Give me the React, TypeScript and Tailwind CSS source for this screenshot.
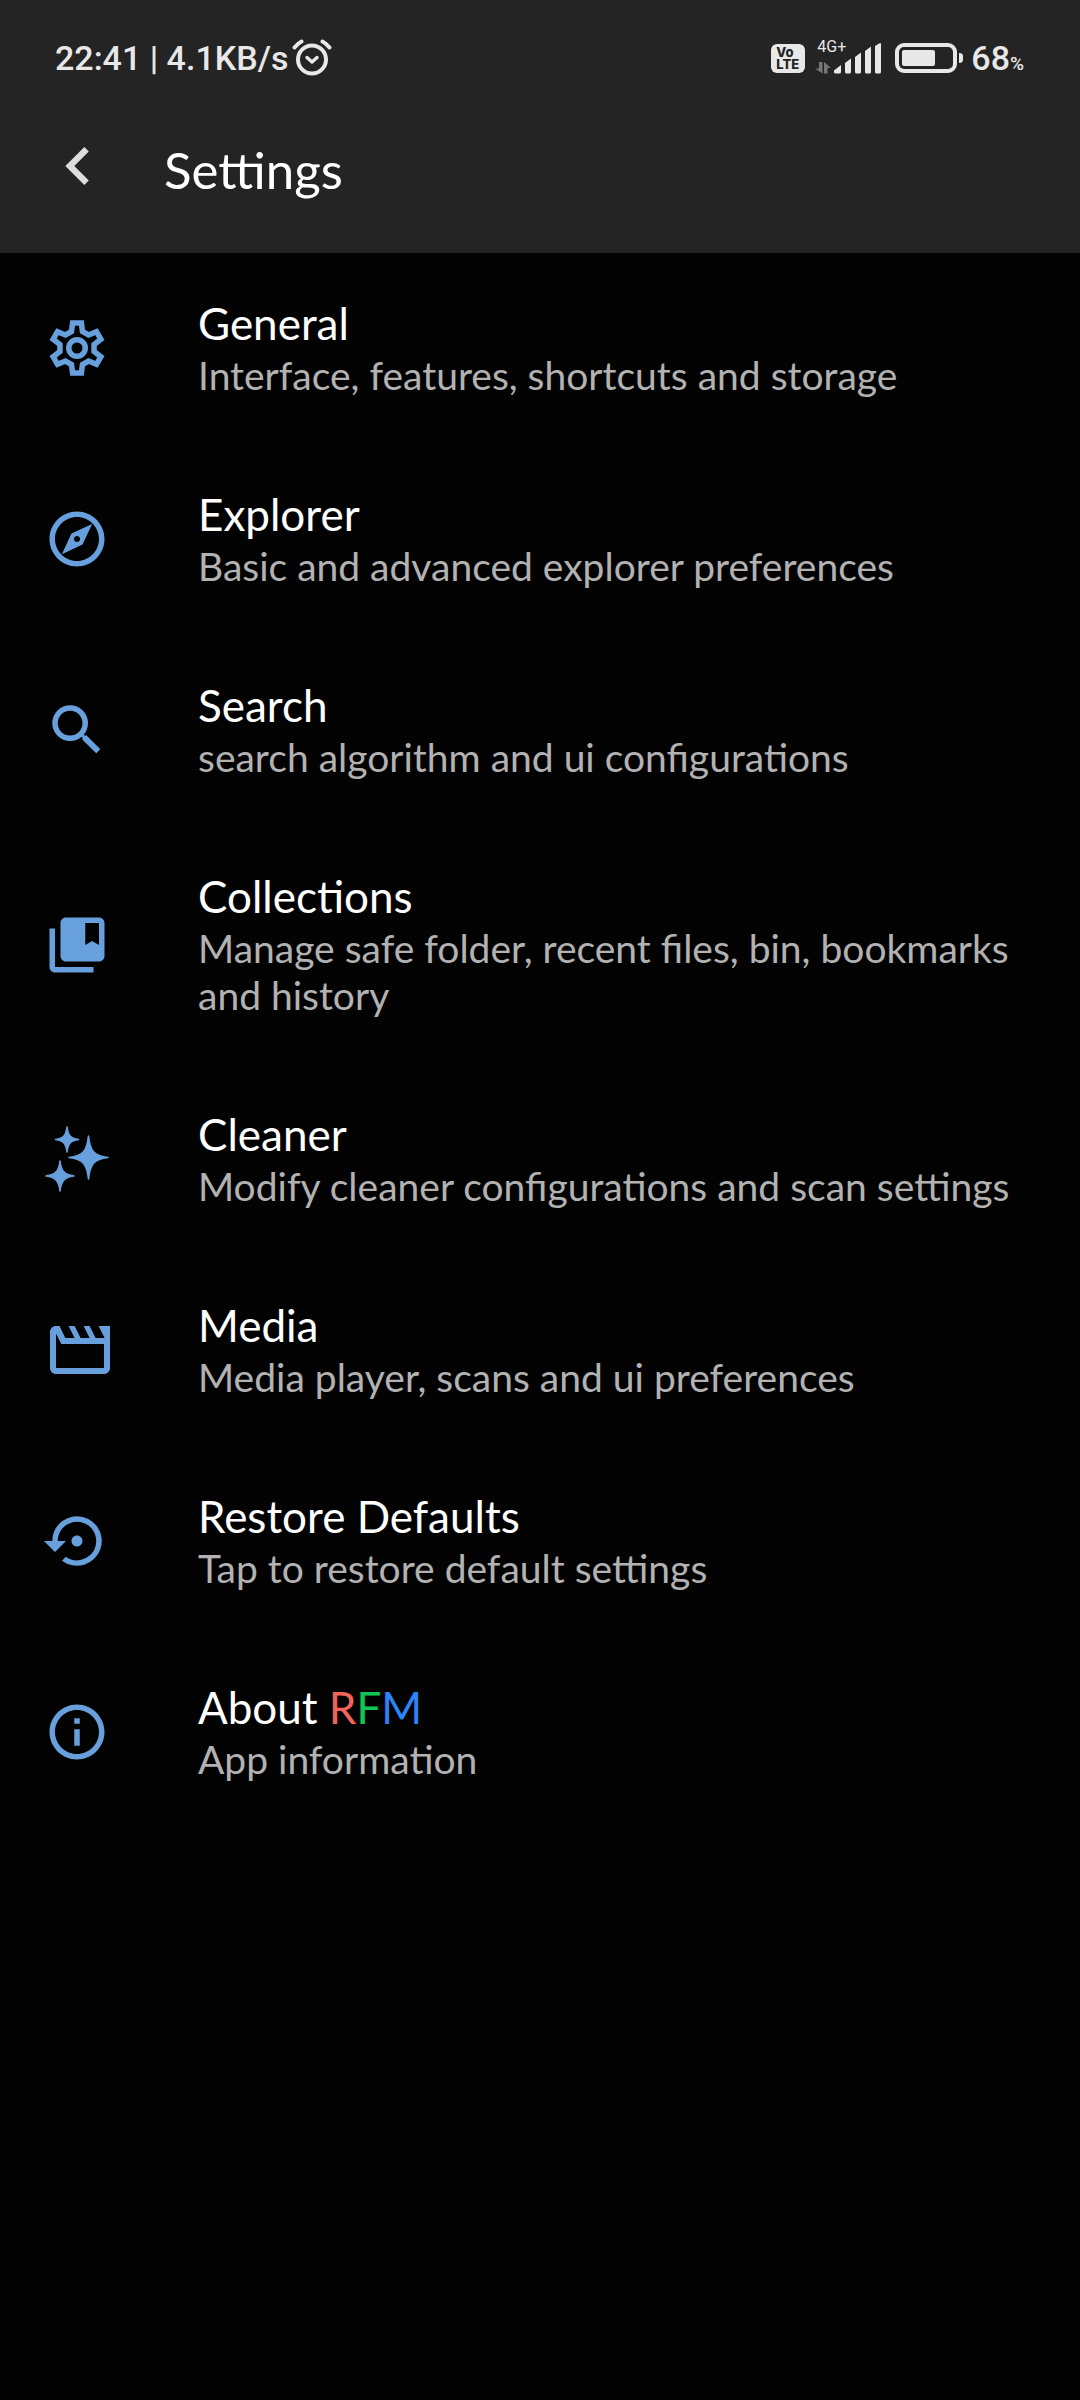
import React from "react";
import {
  MdChevronLeft,
  MdCollectionsBookmark,
  MdInfoOutline,
  MdOutlineExplore,
  MdSearch,
  MdSettingsBackupRestore,
} from "react-icons/md";

const gearTooth = [
  [-2, -6],
  [-1.6, -9.1],
  [1.6, -9.1],
  [2, -6],
];

const gearPoints = Array.from({ length: 6 }, (_, i) => (i * Math.PI) / 3)
  .flatMap((a) =>
    gearTooth.map(([x, y]) =>
      [12 + x * Math.cos(a) - y * Math.sin(a), 12 + x * Math.sin(a) + y * Math.cos(a)]
        .map((n) => n.toFixed(2))
        .join(","),
    ),
  )
  .join(" ");

function GearIcon() {
  return (
    <svg viewBox="0 0 24 24" className="size-[66px]" fill="none" stroke="currentColor" strokeWidth="2" aria-hidden="true">
      <polygon points={gearPoints} />
      <circle cx="12" cy="12" r="3" />
    </svg>
  );
}

function SparklesIcon() {
  return (
    <svg viewBox="0 0 66 66" className="size-[66px]" fill="currentColor" stroke="currentColor" strokeWidth="1.6" strokeLinejoin="round" aria-hidden="true">
      <path d="M44.5 10C46 25 50 30 64 31.5C50 33 46 38 44.5 53C43 38 39 33 25 31.5C39 30 43 25 44.5 10Z" />
      <path d="M23 1C24 9.500 26.5 12.500 34.500 13.500C26.5 14.500 24 17.500 23 26C22 17.500 19.5 14.500 11.500 13.500C19.5 12.500 22 9.500 23 1Z" />
      <path d="M16 35C17 45 20.5 49 30 50C20.5 51 17 55 16 65C15 55 11.5 51 2 50C11.5 49 15 45 16 35Z" />
    </svg>
  );
}

function ClapperIcon() {
  return (
    <svg viewBox="0 0 24 24" className="size-[72px] shrink-0" fill="currentColor" aria-hidden="true">
      <path d="M18.2 4l2 4h-3l-2-4h-2l2 4h-3l-2-4h-2l2 4H7.1L5.2 4H4c-1.1 0-2 .9-2 2v12c0 1.1.9 2 2 2h16c1.1 0 2-.9 2-2V4zM4 6.47L5.76 10H20v8H4z" />
    </svg>
  );
}

function AlarmIcon() {
  return (
    <svg viewBox="0 0 40 38" className="h-[38px] w-10" fill="none" stroke="currentColor" strokeLinecap="round" aria-hidden="true">
      <circle cx="20" cy="20.5" r="14" strokeWidth="4" />
      <path d="M15 18.5l5 4.5 5-4.5" strokeWidth="3.4" strokeLinejoin="round" />
      <path d="M2.5 8.5C4.5 6 6.5 4 9.5 2.5M37.5 8.5C35.5 6 33.5 4 30.5 2.5" strokeWidth="4" />
    </svg>
  );
}

function SignalIcon() {
  return (
    <svg viewBox="0 0 68 31" className="h-[31px] w-[68px]" fill="currentColor" aria-hidden="true">
      <g fill="#777777">
        <path d="M4 19h3.5v11.5L0 25.5h4z" />
        <path d="M9 30.5V19l7 6h-3.5v5.5z" />
      </g>
      <path d="M19 27.5l7-5.5V29a1.5 1.5 0 0 1-1.5 1.5h-4A1.5 1.5 0 0 1 19 29z" />
      <path d="M30 20l6-4.5V29a1.5 1.5 0 0 1-1.5 1.5h-3A1.5 1.5 0 0 1 30 29z" />
      <path d="M40 14l6-4.5V29a1.5 1.5 0 0 1-1.5 1.5h-3A1.5 1.5 0 0 1 40 29z" />
      <path d="M50 8l6-4.5V29a1.5 1.5 0 0 1-1.5 1.5h-3A1.5 1.5 0 0 1 50 29z" />
      <path d="M60 3l5-3q1 0 1 1V29a1.5 1.5 0 0 1-1.5 1.5h-3A1.5 1.5 0 0 1 60 29z" />
    </svg>
  );
}

function BatteryIcon() {
  return (
    <svg viewBox="0 0 68 30" className="h-[30px] w-[68px]" fill="currentColor" aria-hidden="true">
      <rect x="2" y="2" width="58" height="26" rx="7" fill="none" stroke="currentColor" strokeWidth="4" />
      <rect x="7" y="7" width="33" height="16" rx="2" />
      <path d="M64 10q4 0 4 3v4q0 3-4 3z" />
    </svg>
  );
}

function StatusBar() {
  return (
    <div className="flex h-[116px] items-center justify-between pr-14 pl-[55px] font-[Roboto,sans-serif] text-[34px] leading-10 text-[#e8e8e8]">
      <div className="flex items-center gap-1">
        <span className="font-medium">22:41 | 4.1KB/s</span>
        <AlarmIcon />
      </div>
      <div className="flex items-center">
        <div className="flex h-[29px] w-[34px] flex-col items-start justify-center rounded-md bg-[#e8e8e8] pl-[5px] font-[Inter,sans-serif] text-[13px] leading-3 font-extrabold text-[#242424]">
          <span>Vo</span>
          <span>LTE</span>
        </div>
        <div className="relative ml-[10px]">
          <SignalIcon />
          <span className="absolute -top-1 left-0.5 text-[16px] leading-4">4G+</span>
        </div>
        <div className="ml-3">
          <BatteryIcon />
        </div>
        <div className="ml-2 flex items-baseline font-medium">
          <span>68</span>
          <span className="text-[19px] leading-5">%</span>
        </div>
      </div>
    </div>
  );
}

type Item = { icon: React.ReactNode; title: React.ReactNode; summary: string };

const items: Item[] = [
  { icon: <GearIcon />, title: "General", summary: "Interface, features, shortcuts and storage" },
  { icon: <MdOutlineExplore className="size-[66px]" />, title: "Explorer", summary: "Basic and advanced explorer preferences" },
  { icon: <MdSearch className="size-[66px]" />, title: "Search", summary: "search algorithm and ui configurations" },
  {
    icon: <MdCollectionsBookmark className="size-[66px]" />,
    title: "Collections",
    summary: "Manage safe folder, recent files, bin, bookmarks and history",
  },
  { icon: <SparklesIcon />, title: "Cleaner", summary: "Modify cleaner configurations and scan settings" },
  { icon: <ClapperIcon />, title: "Media", summary: "Media player, scans and ui preferences" },
  { icon: <MdSettingsBackupRestore className="size-[66px]" />, title: "Restore Defaults", summary: "Tap to restore default settings" },
  {
    icon: <MdInfoOutline className="size-[66px]" />,
    title: (
      <>
        About <span className="text-[#f26459]">R</span>
        <span className="text-[#10c755]">F</span>
        <span className="text-[#2b84fa]">M</span>
      </>
    ),
    summary: "App information",
  },
];

export default function App() {
  return (
    <div className="min-h-screen bg-[#030303] font-[Lato,sans-serif]">
      <header className="bg-[#242424] pb-[30px]">
        <StatusBar />
        <div className="flex items-center pl-10">
          <button type="button" aria-label="Back" className="-mt-2 text-[#dddddd]">
            <MdChevronLeft className="size-[76px]" />
          </button>
          <h1 className="ml-12 text-[51px] leading-[107px] text-white">Settings</h1>
        </div>
      </header>
      <main>
        <ul>
          {items.map((item) => (
            <li key={item.summary}>
              <button type="button" className="flex w-full items-center pt-11 pr-[60px] pb-[45px] pl-11 text-left">
                <span className="w-[154px] shrink-0 text-[#68a0de]">{item.icon}</span>
                <span className="flex min-w-0 flex-col gap-[3px]">
                  <span className="text-[44px] leading-[52px] text-white">{item.title}</span>
                  <span className="text-[39px] leading-[47px] text-[#b2b2b2]">{item.summary}</span>
                </span>
              </button>
            </li>
          ))}
        </ul>
      </main>
    </div>
  );
}
